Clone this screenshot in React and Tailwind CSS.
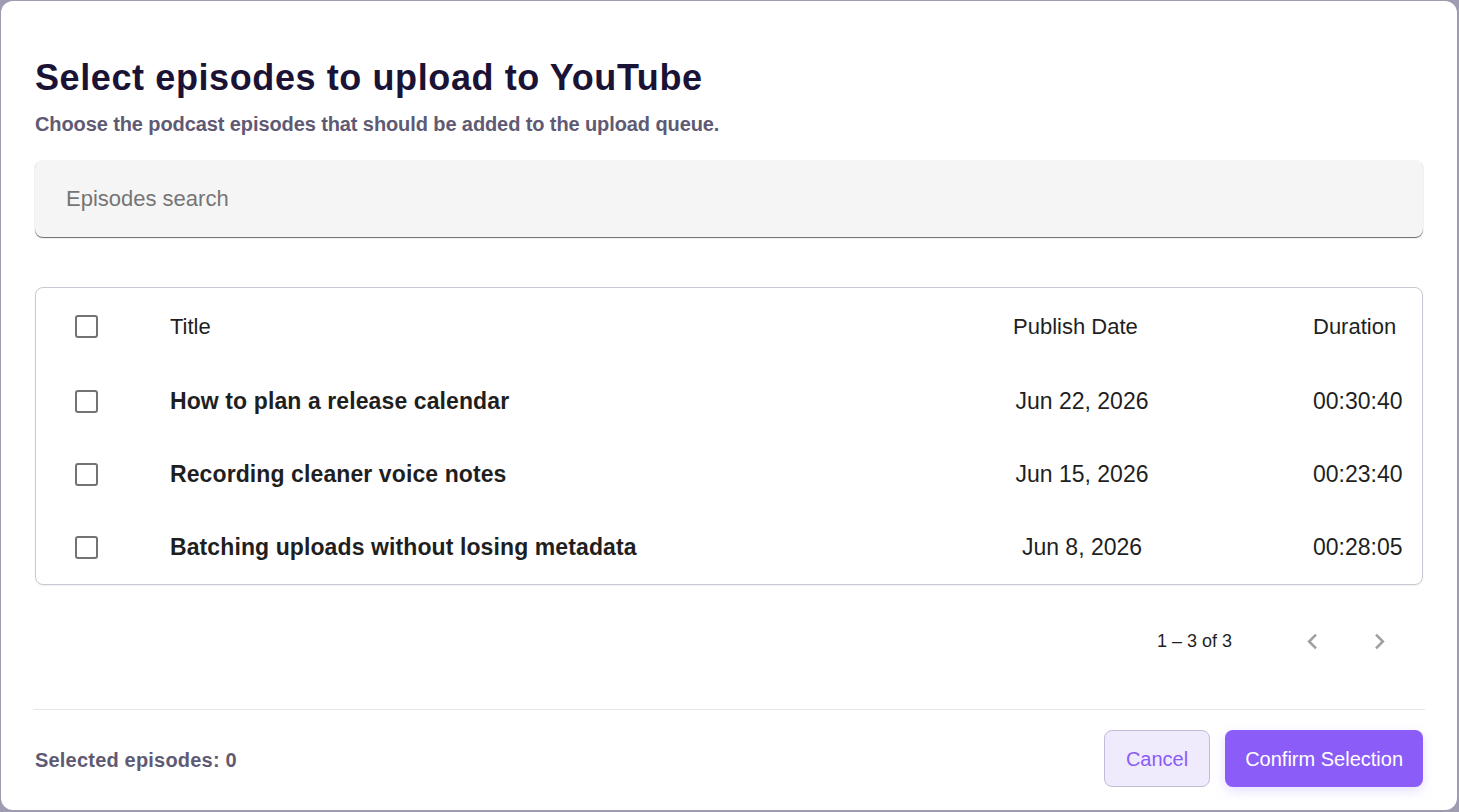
import React from "react";

const episodes = [
  { title: "How to plan a release calendar", date: "Jun 22, 2026", duration: "00:30:40" },
  { title: "Recording cleaner voice notes", date: "Jun 15, 2026", duration: "00:23:40" },
  { title: "Batching uploads without losing metadata", date: "Jun 8, 2026", duration: "00:28:05" },
];

const arial = { fontFamily: '"Liberation Sans", Arial, sans-serif' };

function Checkbox() {
  return <span className="block w-[23px] h-[23px] border-[2.5px] border-[#737373] rounded-[3px] bg-white" />;
}

function Row({ head, title, date, duration }) {
  const size = head ? "text-[22px]" : "text-[23px]";
  return (
    <div className={`flex items-center ${head ? "h-[77px]" : "h-[73px]"}`}>
      <div className="w-[134px] pl-[39px] flex items-center">
        <Checkbox />
      </div>
      <div className={`flex-1 ${size} text-[#1f1f1f] ${head ? "" : "font-bold tracking-[0.1px]"}`}>{title}</div>
      <div className={`w-[300px] ${size} text-[#1f1f1f]`}>
        {head ? <span>{date}</span> : <span className="block w-[138px] text-center">{date}</span>}
      </div>
      <div className={`w-[109px] ${size} text-[#1f1f1f]`}>{duration}</div>
    </div>
  );
}

export default function App() {
  return (
    <div className="w-[1459px] h-[812px] bg-[#9f9bb0] pt-[1px] pl-[1px] overflow-hidden">
      <div className="w-[1456px] h-[809px] bg-white rounded-[12px] px-[34px] pt-[57px] flex flex-col" style={arial}>
        <h1 className="text-[36px] leading-[40px] font-bold text-[#1b1336] tracking-[0.6px]">
          Select episodes to upload to YouTube
        </h1>
        <p className="mt-[14px] text-[20px] leading-[24px] font-bold text-[#5f5a73] tracking-[-0.1px]">
          Choose the podcast episodes that should be added to the upload queue.
        </p>

        <div className="mt-[24px] h-[77px] bg-[#f5f5f5] rounded-[8px] flex items-center pl-[31px] shadow-[0_1px_1px_rgba(0,0,0,0.6)]">
          <span className="text-[22px] text-[#757575]">Episodes search</span>
        </div>

        <div className="mt-[50px] border border-[#c9c7d2] rounded-[8px] shadow-[0_1px_2px_rgba(0,0,0,0.06)]">
          <Row head title="Title" date="Publish Date" duration="Duration" />
          {episodes.map((e) => (
            <Row key={e.title} title={e.title} date={e.date} duration={e.duration} />
          ))}
        </div>

        <div className="mt-[28px] h-[56px] flex items-center justify-end pr-[24px]">
          <span className="text-[18px] text-[#1f1f1f] mr-[60px]">1 – 3 of 3</span>
          <button className="w-[40px] h-[40px] flex items-center justify-center mr-[27px]">
            <svg width="31" height="31" viewBox="0 0 24 24" fill="#a0a0a0">
              <path d="M15.41 7.41 14 6l-6 6 6 6 1.41-1.41L10.83 12z" />
            </svg>
          </button>
          <button className="w-[40px] h-[40px] flex items-center justify-center">
            <svg width="31" height="31" viewBox="0 0 24 24" fill="#a0a0a0">
              <path d="M10 6 8.59 7.41 13.17 12l-4.58 4.59L10 18l6-6z" />
            </svg>
          </button>
        </div>

        <div className="mt-[40px] -mx-[2px] h-px bg-[#e6e6e6]" />

        <div className="mt-[20px] flex items-center justify-between">
          <span className="text-[20px] font-bold text-[#5f5a73] pt-[2px] tracking-[0.2px]">
            Selected episodes: 0
          </span>
          <div className="flex items-center gap-[15px]">
            <button className="h-[57px] px-[21px] rounded-[8px] bg-[#efebfd] border border-[#c3bcd9] text-[20px] text-[#8a5cf6]">
              Cancel
            </button>
            <button className="h-[57px] px-[20px] rounded-[8px] bg-[#8b5cf8] text-[20px] text-white shadow-[0_4px_12px_rgba(139,92,246,0.2)]">
              Confirm Selection
            </button>
          </div>
        </div>
      </div>
    </div>
  );
}
